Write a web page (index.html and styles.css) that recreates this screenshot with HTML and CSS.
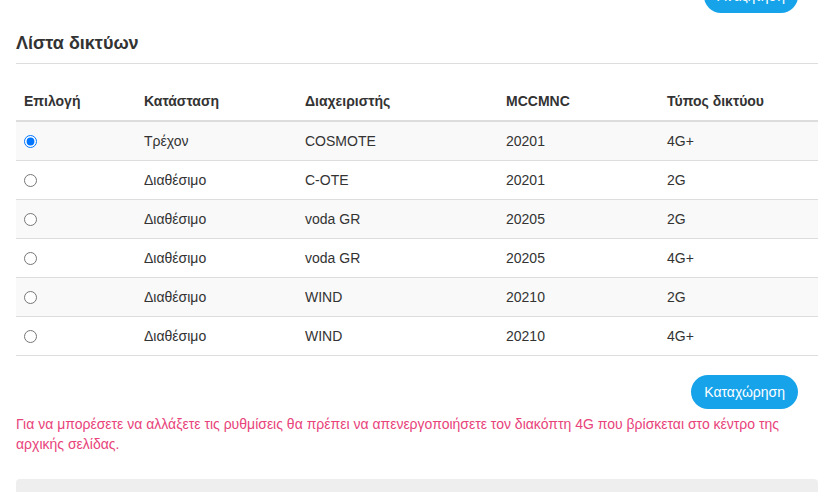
FILE: index.html
```html
<!DOCTYPE html>
<html lang="el">
<head>
    <meta charset="UTF-8">
    <meta name="viewport" content="width=device-width, initial-scale=1.0">
    <title>Δίκτυα</title>
    <link rel="stylesheet" href="styles.css">
</head>
<body>
    <div id="page">
        <div class="top-actions">
            <button class="btn-blue">Αναζήτηση</button>
        </div>

        <h3 class="title">Λίστα δικτύων</h3>

        <table class="net-table">
            <thead>
                <tr>
                    <th class="c1">Επιλογή</th>
                    <th class="c2">Κατάσταση</th>
                    <th class="c3">Διαχειριστής</th>
                    <th class="c4">MCCMNC</th>
                    <th>Τύπος δικτύου</th>
                </tr>
            </thead>
            <tbody>
                <tr>
                    <td><input type="radio" name="net" checked></td>
                    <td>Τρέχον</td>
                    <td>COSMOTE</td>
                    <td>20201</td>
                    <td>4G+</td>
                </tr>
                <tr>
                    <td><input type="radio" name="net"></td>
                    <td>Διαθέσιμο</td>
                    <td>C-OTE</td>
                    <td>20201</td>
                    <td>2G</td>
                </tr>
                <tr>
                    <td><input type="radio" name="net"></td>
                    <td>Διαθέσιμο</td>
                    <td>voda GR</td>
                    <td>20205</td>
                    <td>2G</td>
                </tr>
                <tr>
                    <td><input type="radio" name="net"></td>
                    <td>Διαθέσιμο</td>
                    <td>voda GR</td>
                    <td>20205</td>
                    <td>4G+</td>
                </tr>
                <tr>
                    <td><input type="radio" name="net"></td>
                    <td>Διαθέσιμο</td>
                    <td>WIND</td>
                    <td>20210</td>
                    <td>2G</td>
                </tr>
                <tr>
                    <td><input type="radio" name="net"></td>
                    <td>Διαθέσιμο</td>
                    <td>WIND</td>
                    <td>20210</td>
                    <td>4G+</td>
                </tr>
            </tbody>
        </table>

        <div class="bottom-actions">
            <button class="btn-blue">Καταχώρηση</button>
        </div>

        <p class="warning">Για να μπορέσετε να αλλάξετε τις ρυθμίσεις θα πρέπει να απενεργοποιήσετε τον διακόπτη 4G που βρίσκεται στο κέντρο της αρχικής σελίδας.</p>

        <div class="grey-panel"></div>
    </div>
</body>
</html>
```

FILE: styles.css
```css
body {
    margin: 0;
    background-color: #ffffff;
    font-family: "Liberation Sans", Arial, sans-serif;
    font-size: 14px;
    color: #333333;
    overflow: hidden;
}

#page {
    padding: 0 7px 0 16px;
}

/* buttons */
.btn-blue {
    background-color: #16a3ea;
    color: #ffffff;
    border: none;
    border-radius: 17px;
    height: 34px;
    padding: 0 13px;
    font-family: "Liberation Sans", Arial, sans-serif;
    font-size: 14px;
}

.top-actions {
    display: flex;
    justify-content: flex-end;
    margin-top: -21px;
    padding-right: 20px;
}

.title {
    margin: 0;
    padding: 20px 0 9px 0;
    font-size: 18px;
    font-weight: bold;
    border-bottom: 1px solid #dddddd;
}

/* table */
.net-table {
    width: 100%;
    border-collapse: collapse;
    margin-top: 18px;
}

.net-table th {
    text-align: left;
    font-weight: bold;
    padding: 10px 8px 10px 8px;
    border-bottom: 2px solid #dddddd;
    line-height: 18px;
}

.net-table td {
    padding: 10px 8px;
    border-bottom: 1px solid #dddddd;
    line-height: 18px;
    height: 18px;
}

.net-table tbody tr:nth-child(odd) {
    background-color: #f9f9f9;
}

.net-table .c1 { width: 104px; }
.net-table .c2 { width: 145px; }
.net-table .c3 { width: 185px; }
.net-table .c4 { width: 145px; }

.net-table input[type="radio"] {
    margin: 0 0 2px 0;
    width: 13px;
    height: 13px;
    vertical-align: middle;
}

.bottom-actions {
    display: flex;
    justify-content: flex-end;
    margin-top: 19px;
    padding-right: 20px;
}

.warning {
    color: #e8437a;
    line-height: 20px;
    margin: 5px 0 0 0;
}

.grey-panel {
    margin-top: 25px;
    height: 13px;
    background-color: #eeeeee;
    border-radius: 4px 4px 0 0;
}
```
